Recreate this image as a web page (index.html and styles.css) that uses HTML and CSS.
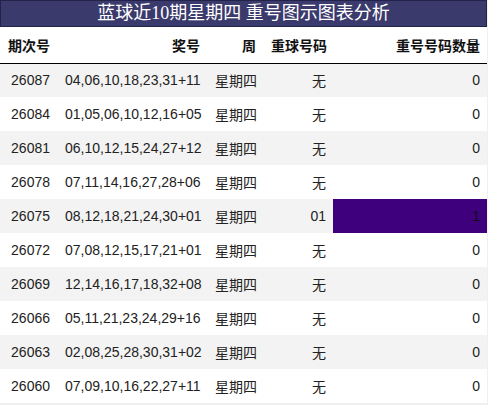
FILE: index.html
```html
<!DOCTYPE html>
<html lang="zh-CN">
<head>
<meta charset="UTF-8">
<title>蓝球近10期星期四 重号图示图表分析</title>
<link rel="stylesheet" href="styles.css">
</head>
<body>
<table class="chart">
  <caption class="title">蓝球近10期星期四 重号图示图表分析</caption>
  <colgroup>
    <col class="c-no">
    <col class="c-num">
    <col class="c-week">
    <col class="c-ball">
    <col class="c-count">
  </colgroup>
  <thead>
    <tr>
      <th class="left">期次号</th>
      <th>奖号</th>
      <th>周</th>
      <th class="left">重球号码</th>
      <th>重号号码数量</th>
    </tr>
  </thead>
  <tbody>
    <tr><td>26087</td><td>04,06,10,18,23,31+11</td><td>星期四</td><td>无</td><td>0</td></tr>
    <tr><td>26084</td><td>01,05,06,10,12,16+05</td><td>星期四</td><td>无</td><td>0</td></tr>
    <tr><td>26081</td><td>06,10,12,15,24,27+12</td><td>星期四</td><td>无</td><td>0</td></tr>
    <tr><td>26078</td><td>07,11,14,16,27,28+06</td><td>星期四</td><td>无</td><td>0</td></tr>
    <tr><td>26075</td><td>08,12,18,21,24,30+01</td><td>星期四</td><td>01</td><td class="hit">1</td></tr>
    <tr><td>26072</td><td>07,08,12,15,17,21+01</td><td>星期四</td><td>无</td><td>0</td></tr>
    <tr><td>26069</td><td>12,14,16,17,18,32+08</td><td>星期四</td><td>无</td><td>0</td></tr>
    <tr><td>26066</td><td>05,11,21,23,24,29+16</td><td>星期四</td><td>无</td><td>0</td></tr>
    <tr><td>26063</td><td>02,08,25,28,30,31+02</td><td>星期四</td><td>无</td><td>0</td></tr>
    <tr><td>26060</td><td>07,09,10,16,22,27+11</td><td>星期四</td><td>无</td><td>0</td></tr>
  </tbody>
</table>
</body>
</html>
```

FILE: styles.css
```css
*{
  margin: 0;
  padding: 0;
  box-sizing: border-box;
}
body{
  background-color: #f0f0f0;
}
.chart{
  width: 487px;
  border-collapse: collapse;
  table-layout: fixed;
  background-color: #fff;
  font-family: "Liberation Sans", "Noto Sans CJK SC", sans-serif;
  font-size: 14px;
  color: #222;
}
.title{
  height: 27px;
  line-height: 25px;
  background-color: #3b3a6c;
  border: 1px solid #23224a;
  color: #fff;
  font-family: "Liberation Serif", "Noto Sans CJK SC", serif;
  font-size: 18px;
  text-align: center;
}
.c-no{ width: 57px; }
.c-num{ width: 150px; }
.c-week{ width: 56px; }
.c-ball{ width: 70px; }
.c-count{ width: 154px; }

th, td{
  padding: 0 7px 0 8px;
  text-align: right;
  white-space: nowrap;
}
th{
  height: 36px;
  font-weight: bold;
  color: #111;
  border-bottom: 1px solid #000;
}
th.left{
  text-align: left;
}
td{
  height: 34px;
}
tbody tr:nth-child(odd){
  background-color: #f3f3f3;
}
td.hit{
  background-color: #3f007d;
  color: #111;
}
```
